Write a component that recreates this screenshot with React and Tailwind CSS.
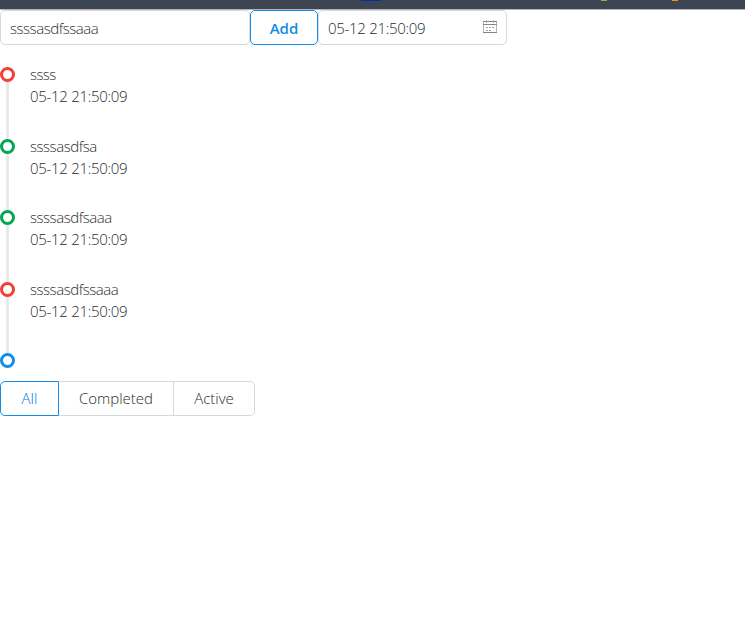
const entries = [
  { text: 'ssss', done: false, spacing: 'tracking-[-0.6px]' },
  { text: 'ssssasdfsa', done: true, spacing: 'tracking-[-0.45px]' },
  { text: 'ssssasdfsaaa', done: true, spacing: 'tracking-[-0.45px]' },
  { text: 'ssssasdfssaaa', done: false, spacing: 'tracking-[-0.45px]' },
];

const TIME = '05-12 21:50:09';

function TopBar() {
  return (
    <header className="flex h-[10px] shrink-0 border-b border-[#b5afb8] bg-[#3d4552]">
      <i className="ml-[90px] h-px w-[8px] bg-[#284c73]" />
      <i className="ml-[263px] h-px w-[20px] bg-[#0030a5]" />
      <i className="ml-[220px] h-px w-[6px] bg-[#82b256]" />
      <i className="ml-[65px] h-px w-[6px] bg-[#f79009]" />
    </header>
  );
}

function CalendarIcon() {
  return (
    <svg className="mb-[3px] h-[13px] w-[14px]" viewBox="0 0 14 13" fill="none" shapeRendering="crispEdges">
      <path d="M.5 2v10M13.5 2v10" stroke="#b5b5b5" />
      <path d="M0 1.5h3M4 1.5h6M11 1.5h3M0 4.5h14M0 12.5h14" stroke="#858585" />
      <path d="M3.5 0v3M10.5 0v3" stroke="#b0a9a0" />
      <path d="M3 7.5h8M3 10.5h5" stroke="#a0a0a0" strokeDasharray="2 1" />
    </svg>
  );
}

function Dot({ color }) {
  return <span className={`relative h-[15px] w-[15px] shrink-0 rounded-full border-[3px] bg-white ${color}`} />;
}

export default function App() {
  return (
    <div className="h-[618px] w-[745px] overflow-hidden bg-white font-['Open_Sans','Noto_Sans',sans-serif] text-[15px] font-light text-[#2b2b2b]">
      <TopBar />
      <div className="flex h-[35px]">
        <div className="flex w-[250px] items-center rounded-[5px] border border-[#d9d9d9] pt-[2px] pl-[9px] tracking-[-0.45px]">ssssasdfssaaa</div>
        <button className="w-[68px] rounded-[5px] border border-[#108ee9] pt-[2px] font-semibold text-[#108ee9]">Add</button>
        <div className="flex w-[189px] items-center justify-between rounded-[5px] border border-[#d9d9d9] pr-[9px] pl-[9px]">
          <span className="pt-[2px] tracking-[-0.3px]">{TIME}</span>
          <CalendarIcon />
        </div>
      </div>

      <ul className="pt-[22px]">
        {entries.map((e) => (
          <li key={e.text} className="flex h-[71.5px]">
            <div className="flex w-[15px] flex-col items-center">
              <Dot color={e.done ? 'border-[#00a854]' : 'border-[#f04134]'} />
              <span className="w-[3px] flex-1 bg-[#e9e9e9]" />
            </div>
            <div className="-mt-[4px] ml-[15px] leading-[22px]">
              <p className={e.spacing}>{e.text}</p>
              <p className="tracking-[-0.3px]">{TIME}</p>
            </div>
          </li>
        ))}
        <li className="flex h-[28px]">
          <Dot color="border-[#108ee9]" />
        </li>
      </ul>

      <div className="flex h-[35px]">
        <button className="w-[59px] rounded-l-[5px] border border-[#108ee9] text-[#0077d8]">All</button>
        <button className="w-[115px] border border-l-0 border-[#d9d9d9]">Completed</button>
        <button className="w-[81px] rounded-r-[5px] border border-l-0 border-[#d9d9d9]">Active</button>
      </div>
    </div>
  );
}
